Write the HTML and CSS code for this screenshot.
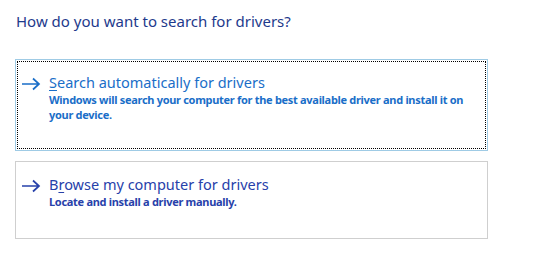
FILE: index.html
```html
<!DOCTYPE html>
<html>
<head>
<meta charset="utf-8">
<link rel="stylesheet" href="styles.css">
</head>
<body>
<div class="page">
  <h1 class="title">How do you want to search for drivers?</h1>
  <div class="option option-focused">
    <div class="row">
      <svg class="arrow" width="20" height="14" viewBox="0 0 20 14"><path d="M1 7H18M12 1.5L18 7L12 12.5" fill="none" stroke="currentColor" stroke-width="1.7"/></svg>
      <div class="texts">
        <div class="head"><u>S</u>earch automatically for drivers</div>
        <div class="desc">Windows will search your computer for the best available driver and install it on your device.</div>
      </div>
    </div>
  </div>
  <div class="option option-plain">
    <div class="row">
      <svg class="arrow" width="20" height="14" viewBox="0 0 20 14"><path d="M1 7H18M12 1.5L18 7L12 12.5" fill="none" stroke="currentColor" stroke-width="1.7"/></svg>
      <div class="texts">
        <div class="head">B<u>r</u>owse my computer for drivers</div>
        <div class="desc">Locate and install a driver manually.</div>
      </div>
    </div>
  </div>
</div>
</body>
</html>
```
FILE: styles.css
```css
html, body {
  margin: 0;
  padding: 0;
  background: #ffffff;
}
.page {
  padding: 10px 0 0 15px;
  font-family: "Noto Sans", "Open Sans", sans-serif;
}
.title {
  margin: 0 0 27px 1px;
  font-size: 15px;
  font-weight: 400;
  color: #1e3a8c;
  line-height: 22px;
}
.option {
  width: 473px;
  box-sizing: border-box;
  margin-bottom: 10px;
}
.option-focused {
  height: 92px;
  border: 1px solid #9fcbe5;
  outline: 1px dotted #000;
  outline-offset: -3px;
  color: #1a6ec8;
}
.option-plain {
  height: 78px;
  border: 1px solid #cfcfcf;
  color: #2741aa;
}
.row {
  display: flex;
  align-items: flex-start;
  padding: 12px 0 0 5px;
}
.arrow {
  margin-top: 5px;
  margin-right: 8px;
  flex: none;
}
.texts {
  width: 420px;
}
.head {
  font-size: 14.5px;
  line-height: 20px;
}
.head u {
  text-decoration-thickness: 1px;
  text-underline-offset: 2px;
}
.desc {
  font-size: 11px;
  font-weight: 700;
  line-height: 15px;
  letter-spacing: -0.3px;
}
```
